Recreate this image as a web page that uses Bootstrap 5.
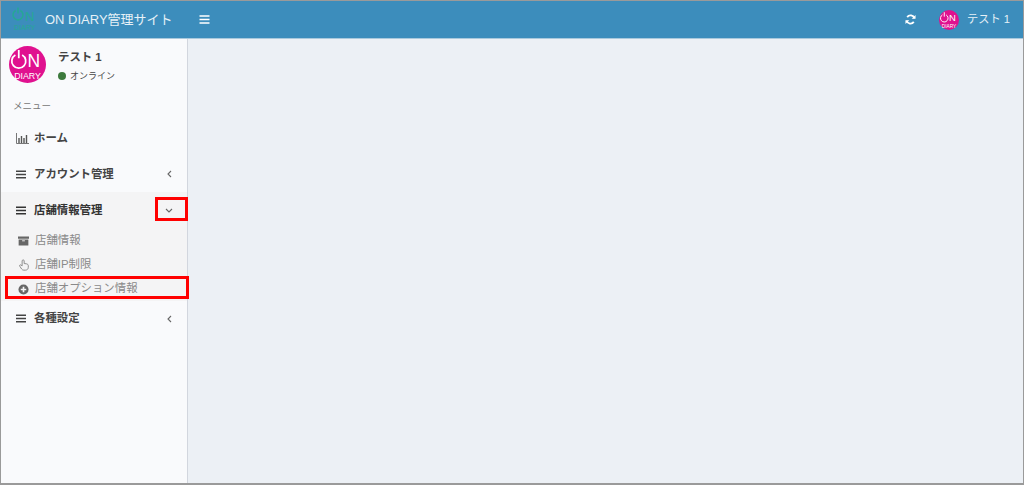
<!DOCTYPE html>
<html lang="ja"><head><meta charset="utf-8"><title>ON DIARY</title>
<link href="https://cdn.jsdelivr.net/npm/bootstrap@5.3.0/dist/css/bootstrap.min.css" rel="stylesheet">
<style>
html,body{height:485px;overflow:hidden}
body{font-family:"Liberation Sans","Noto Sans CJK JP",sans-serif;font-size:12px;color:#444;background:#ecf0f5}
.shot-frame{height:485px;border:1px solid #9a9a9a;border-bottom-width:2px}
.top-bar{height:38px;background:#3c8dbc;border-bottom:1px solid #a9c9dd;color:#e6f1f7;flex:none}
.brand-area{width:187px;padding-left:10px;font-size:13px;gap:7px;flex:none}
.brand-name{line-height:1;white-space:nowrap}
.burger-btn{margin-left:11px}
.top-user{font-size:11.2px;gap:8px;padding-right:13px}
.sync-icon{margin-right:15px}
.body-area{height:445px}
.side-col{width:187px;background:#f9fafc;border-right:1px solid #d2d6de;flex:none}
.side-user{padding:7px 0 0 8px;height:57px;gap:12px}
.side-name{font-size:11.4px;font-weight:700;color:#444;line-height:14px;margin-top:4px}
.side-status{font-size:9px;color:#444;margin-top:5px;line-height:14px;gap:4px}
.status-dot{width:8px;height:8px;border-radius:50%;background:#3d7a3d}
.side-head{font-size:9.5px;color:#777;padding:0 12px;height:18px;line-height:18px;margin-top:1px;margin-bottom:6px}
.menu-row{height:35.5px;padding-left:15px;padding-right:14px;font-weight:700;font-size:11.4px;color:#444;gap:8px}
.menu-row .row-label{flex:1}
.home-label{margin-left:-3px}
.menu-open{background:#f4f4f5;color:#333;height:36px;padding-top:1px}
.sub-block{background:#f4f4f5;padding:1px 0 0 0}
.sub-row{height:24px;padding-left:16px;gap:5px;font-size:11.4px;color:#8a8a8a}
.sub-glyph{width:13px;flex:none;display:flex;justify-content:center;align-items:center}
.chev-box{position:absolute;left:154px;top:5px;width:33px;height:24px;border:3px solid #f00}
.opt-box{position:absolute;left:4px;top:-1px;width:184px;height:23px;border:3px solid #f00}
.main-col{background:#ecf0f5}
</style></head>
<body>
<div class="shot-frame d-flex flex-column">
 <header class="top-bar d-flex align-items-center">
  <div class="brand-area d-flex align-items-center">
   <svg width="27" height="27" viewBox="0 0 27 27"><path d="M4.600 4.500A5 5 0 1 0 9.400 4.500M7 1.500v6" fill="none" stroke="#25a894" stroke-width="1.500"/><text x="14" y="14.500" font-size="13" fill="#25a894" font-family="Liberation Sans">N</text><text x="3" y="23.500" font-size="7" fill="#25a894" font-family="Liberation Sans">DIARY</text></svg>
   <span class="brand-name">ON DIARY管理サイト</span>
  </div>
  <svg class="burger-btn" width="11" height="9" viewBox="0 0 11 9"><path d="M.5 1h10M.5 4.500h10M.5 8h10" stroke="#fff" stroke-width="1.600"/></svg>
  <div class="top-user d-flex align-items-center ms-auto">
   <svg class="sync-icon" width="11" height="11" viewBox="0 0 12 12"><path d="M10.300 4.600A4.500 4.500 0 0 0 2.400 3.400" fill="none" stroke="#fff" stroke-width="2"/><path d="M1.700 7.400a4.500 4.500 0 0 0 7.900 1.200" fill="none" stroke="#fff" stroke-width="2"/><path d="M11.500 1v4.200H7.300zM.5 11V6.800h4.200z" fill="#fff"/></svg>
   <svg width="20" height="20" viewBox="0 0 36 36"><circle cx="18" cy="18" r="18" fill="#e0118f"/><path d="M6.200 8.800A6.800 6.800 0 1 0 12.800 8.800M9.500 4v8" fill="none" stroke="#fff" stroke-width="1.700"/><text x="18" y="20.500" font-size="17" fill="#fff" font-family="Liberation Sans">N</text><text x="5" y="32" font-size="8.600" fill="#fff" font-family="Liberation Sans">DIARY</text></svg>
   <span>テスト 1</span>
  </div>
 </header>
 <div class="body-area d-flex">
  <aside class="side-col">
   <div class="side-user d-flex">
    <svg width="37" height="37" viewBox="0 0 36 36"><circle cx="18" cy="18" r="18" fill="#e0118f"/><path d="M6.200 8.800A6.800 6.800 0 1 0 12.800 8.800M9.500 4v8" fill="none" stroke="#fff" stroke-width="1.700"/><text x="18" y="20.500" font-size="17" fill="#fff" font-family="Liberation Sans">N</text><text x="5" y="32" font-size="8.600" fill="#fff" font-family="Liberation Sans">DIARY</text></svg>
    <div>
     <div class="side-name">テスト 1</div>
     <div class="side-status d-flex align-items-center"><span class="status-dot"></span>オンライン</div>
    </div>
   </div>
   <div class="side-head">メニュー</div>
   <div class="menu-row d-flex align-items-center">
    <svg width="13" height="11" viewBox="0 0 13 11"><path d="M.5 0v10.500H13" fill="none" stroke="#777"/><path d="M3 5v5M5.500 3v7M8 5v5M10.500 2v8" stroke="#555" stroke-width="1.400"/></svg>
    <span class="row-label home-label">ホーム</span>
   </div>
   <div class="menu-row d-flex align-items-center">
    <svg width="10" height="9" viewBox="0 0 11 9"><path d="M0 1h11M0 4.500h11M0 8h11" stroke="#444" stroke-width="1.600"/></svg>
    <span class="row-label">アカウント管理</span>
    <svg width="7" height="8" viewBox="0 0 7 8"><path d="M5 1 2 4l3 3" fill="none" stroke="#666" stroke-width="1.100"/></svg>
   </div>
   <div class="position-relative">
    <div class="menu-row menu-open d-flex align-items-center">
     <svg width="10" height="9" viewBox="0 0 11 9"><path d="M0 1h11M0 4.500h11M0 8h11" stroke="#333" stroke-width="1.600"/></svg>
     <span class="row-label">店舗情報管理</span>
     <svg width="8" height="7" viewBox="0 0 8 7"><path d="M1 2l3 3 3-3" fill="none" stroke="#666" stroke-width="1.100"/></svg>
    </div>
    <div class="chev-box"></div>
   </div>
   <div class="sub-block">
    <div class="sub-row d-flex align-items-center">
     <span class="sub-glyph"><svg width="11" height="10" viewBox="0 0 12 10"><path d="M0 0h12v2.500H0zM.7 3.300h10.600V10H.7z" fill="#666"/><path d="M4.500 4.800h3" stroke="#f4f4f5" stroke-width="1"/></svg></span>
     <span>店舗情報</span>
    </div>
    <div class="sub-row d-flex align-items-center">
     <span class="sub-glyph"><svg width="12" height="12" viewBox="0 0 13 14"><path d="M5.500 1c.8 0 1.200.6 1.200 1.300v3l2.600.3c1.300.2 2.200 1 2.200 2.300v1.800c0 1.900-1.300 3.300-3.300 3.300H6.200c-1.100 0-1.800-.5-2.400-1.300L1.500 8.300c-.7-1 .7-2 1.600-1.200l1.200 1V2.300C4.300 1.600 4.800 1 5.500 1z" fill="none" stroke="#888" stroke-width="1.100"/></svg></span>
     <span>店舗IP制限</span>
    </div>
    <div class="position-relative">
     <div class="sub-row d-flex align-items-center">
      <span class="sub-glyph"><svg width="11" height="11" viewBox="0 0 12 12"><circle cx="6" cy="6" r="5.500" fill="#666"/><path d="M3 6h6M6 3v6" stroke="#f4f4f5" stroke-width="1.800"/></svg></span>
      <span>店舗オプション情報</span>
     </div>
     <div class="opt-box"></div>
    </div>
   </div>
   <div class="menu-row d-flex align-items-center">
    <svg width="10" height="9" viewBox="0 0 11 9"><path d="M0 1h11M0 4.500h11M0 8h11" stroke="#444" stroke-width="1.600"/></svg>
    <span class="row-label">各種設定</span>
    <svg width="7" height="8" viewBox="0 0 7 8"><path d="M5 1 2 4l3 3" fill="none" stroke="#666" stroke-width="1.100"/></svg>
   </div>
  </aside>
  <main class="main-col flex-grow-1"></main>
 </div>
</div>
</body></html>
